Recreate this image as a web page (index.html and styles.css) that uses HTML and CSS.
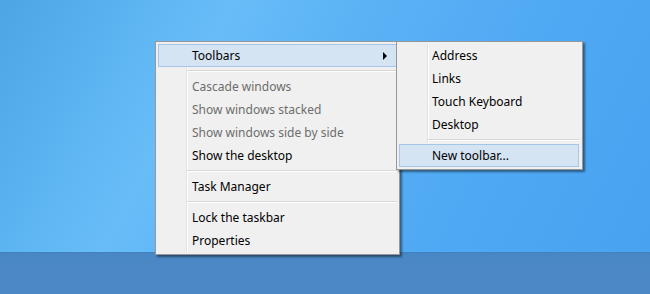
FILE: index.html
```html
<!DOCTYPE html>
<html lang="en">
<head>
  <meta charset="UTF-8" />
  <title>Taskbar context menu</title>
  <link rel="stylesheet" href="styles.css">
</head>
<body>
  <div class="screen">
    <div class="desktop">
      <div class="menu main-menu">
        <div class="item active">Toolbars<span class="arrow"></span></div>
        <div class="sep"></div>
        <div class="item disabled">Cascade windows</div>
        <div class="item disabled">Show windows stacked</div>
        <div class="item disabled">Show windows side by side</div>
        <div class="item">Show the desktop</div>
        <div class="sep"></div>
        <div class="item">Task Manager</div>
        <div class="sep"></div>
        <div class="item">Lock the taskbar</div>
        <div class="item">Properties</div>

        <div class="menu sub-menu">
          <div class="item">Address</div>
          <div class="item">Links</div>
          <div class="item">Touch Keyboard</div>
          <div class="item">Desktop</div>
          <div class="sep"></div>
          <div class="item active">New toolbar...</div>
        </div>
      </div>
    </div>
    <div class="taskbar"></div>
  </div>
</body>
</html>
```

FILE: styles.css
```css
html, body {
  margin: 0;
  padding: 0;
}

body {
  font-family: 'Noto Sans', 'Open Sans', sans-serif;
  font-size: 12px;
}

.screen {
  width: 650px;
  height: 294px;
  display: flex;
  flex-direction: column;
  overflow: hidden;
}

.desktop {
  flex: 1;
  position: relative;
  background: linear-gradient(118deg, #4ca6e4 0%, #5ab3f0 16%, #68bdf8 30%, #5cb4f6 45%, #50a9f3 70%, #48a2f0 100%);
}

.taskbar {
  height: 42px;
  background: linear-gradient(180deg, #3f7fbf 0px, #4a88c5 2px, #4c88c3 100%);
}

.menu {
  position: absolute;
  background: #f0f0f0;
  border: 1px solid #979797;
  padding: 2px;
  box-shadow: 2px 2px 2px rgba(0, 0, 0, 0.45);
  display: flex;
  flex-direction: column;
}

/* gutter line on the left */
.menu::before {
  content: "";
  position: absolute;
  top: 2px;
  bottom: 2px;
  left: 30px;
  width: 1px;
  background: #e2e2e2;
  border-right: 1px solid #ffffff;
}

.main-menu {
  left: 155px;
  top: 41px;
  width: 239px;
}

.sub-menu {
  left: 240px;
  top: -1px;
  width: 180px;
  padding-right: 3px;
}

.item {
  position: relative;
  height: 20px;
  padding-top: 1px;
  line-height: 20px;
  padding-left: 33px;
  border: 1px solid transparent;
  color: #000;
  white-space: nowrap;
}

.sub-menu .item {
  padding-left: 32px;
}

.item.disabled {
  color: #6d6d6d;
}

.item.active {
  background: #d5e4f3;
  border-color: #a5c6e6;
}

.arrow {
  position: absolute;
  right: 9px;
  top: 7px;
  width: 0;
  height: 0;
  border-top: 4px solid transparent;
  border-bottom: 4px solid transparent;
  border-left: 4px solid #000;
}

.sep {
  height: 8px;
  margin-left: 29px;
  position: relative;
}

.sep::after {
  content: "";
  position: absolute;
  left: 0;
  right: 0;
  top: 3px;
  height: 1px;
  background: #d7d7d7;
  border-bottom: 1px solid #ffffff;
}
```
